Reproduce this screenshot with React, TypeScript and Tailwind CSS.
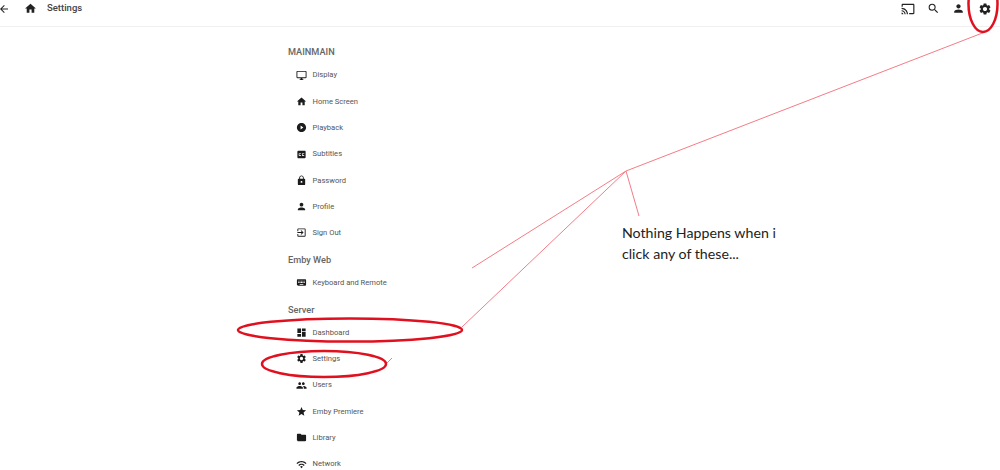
import { ReactNode } from "react";
import {
  MdArrowBack, MdCast, MdClosedCaption, MdDashboard, MdExitToApp, MdFolder, MdHome, MdKeyboard, MdLock,
  MdOutlineDesktopWindows, MdPeople, MdPerson, MdPlayCircleFilled, MdSearch, MdSettings,
  MdStar, MdWifi,
} from "react-icons/md";

const Row = ({ icon, label }: { icon: ReactNode; label: string }) => (
  <div className="h-[26.3px] flex items-center pl-[7px]">
    <span className="w-[12px] flex justify-center text-[11px] text-[#1c1c1c]">{icon}</span>
    <span className="ml-[5.5px] text-[7.6px] text-[#555]">{label}</span>
  </div>
);

const Heading = ({ children, className }: { children: ReactNode; className: string }) => (
  <h2 className={`flex items-center text-[9.2px] font-medium text-[#666] ${className}`}>{children}</h2>
);

const Annotations = () => (
  <svg className="absolute inset-0" width="1000" height="470" fill="none">
    <g stroke="#f47c86" strokeWidth="1">
      <path d="M985 32L626 171L472 268" />
      <path d="M626 171L462 327" />
      <path d="M626 171L639 216" />
      <path d="M392 358L386 364" />
    </g>
    <g stroke="#e0101f" strokeWidth="2.5">
      <ellipse cx="983" cy="4" rx="14.5" ry="28" />
      <ellipse cx="350" cy="330" rx="112" ry="11.5" />
      <ellipse cx="324" cy="364" rx="62" ry="13" />
    </g>
  </svg>
);

export default function App() {
  return (
    <div className="relative w-[1000px] h-[470px] overflow-hidden bg-white font-['Roboto',sans-serif]">
      <header className="h-[27px] flex items-center border-b border-[#f0f0f0] pb-[9px] text-[#222]">
        <MdArrowBack className="ml-[-2px] text-[12px]" />
        <MdHome className="ml-[14px] text-[13px]" />
        <span className="ml-[10px] text-[9.5px] font-medium text-[#444]">Settings</span>
        <div className="ml-auto flex items-center">
          <MdCast className="text-[14px]" />
          <MdSearch className="ml-[12px] text-[13px]" />
          <MdPerson className="ml-[12px] text-[13px]" />
          <MdSettings className="ml-[13px] mr-[8px] text-[14px]" />
        </div>
      </header>
      <main className="pl-[288px] pt-[15px] w-[500px]">
        <Heading className="h-[20px]">MAINMAIN</Heading>
        <Row icon={<MdOutlineDesktopWindows />} label="Display" />
        <Row icon={<MdHome />} label="Home Screen" />
        <Row icon={<MdPlayCircleFilled />} label="Playback" />
        <Row icon={<MdClosedCaption />} label="Subtitles" />
        <Row icon={<MdLock />} label="Password" />
        <Row icon={<MdPerson />} label="Profile" />
        <Row icon={<MdExitToApp />} label="Sign Out" />
        <Heading className="h-[23px] pt-[5px]">Emby Web</Heading>
        <Row icon={<MdKeyboard />} label="Keyboard and Remote" />
        <Heading className="h-[24px] pt-[6px]">Server</Heading>
        <Row icon={<MdDashboard />} label="Dashboard" />
        <Row icon={<MdSettings />} label="Settings" />
        <Row icon={<MdPeople />} label="Users" />
        <Row icon={<MdStar />} label="Emby Premiere" />
        <Row icon={<MdFolder />} label="Library" />
        <Row icon={<MdWifi />} label="Network" />
      </main>
      <Annotations />
      <p className="absolute left-[622px] top-[222px] font-['Lato',sans-serif] text-[14.2px] leading-[21px] text-[#222]">
        Nothing Happens when i<br />click any of these...
      </p>
    </div>
  );
}
